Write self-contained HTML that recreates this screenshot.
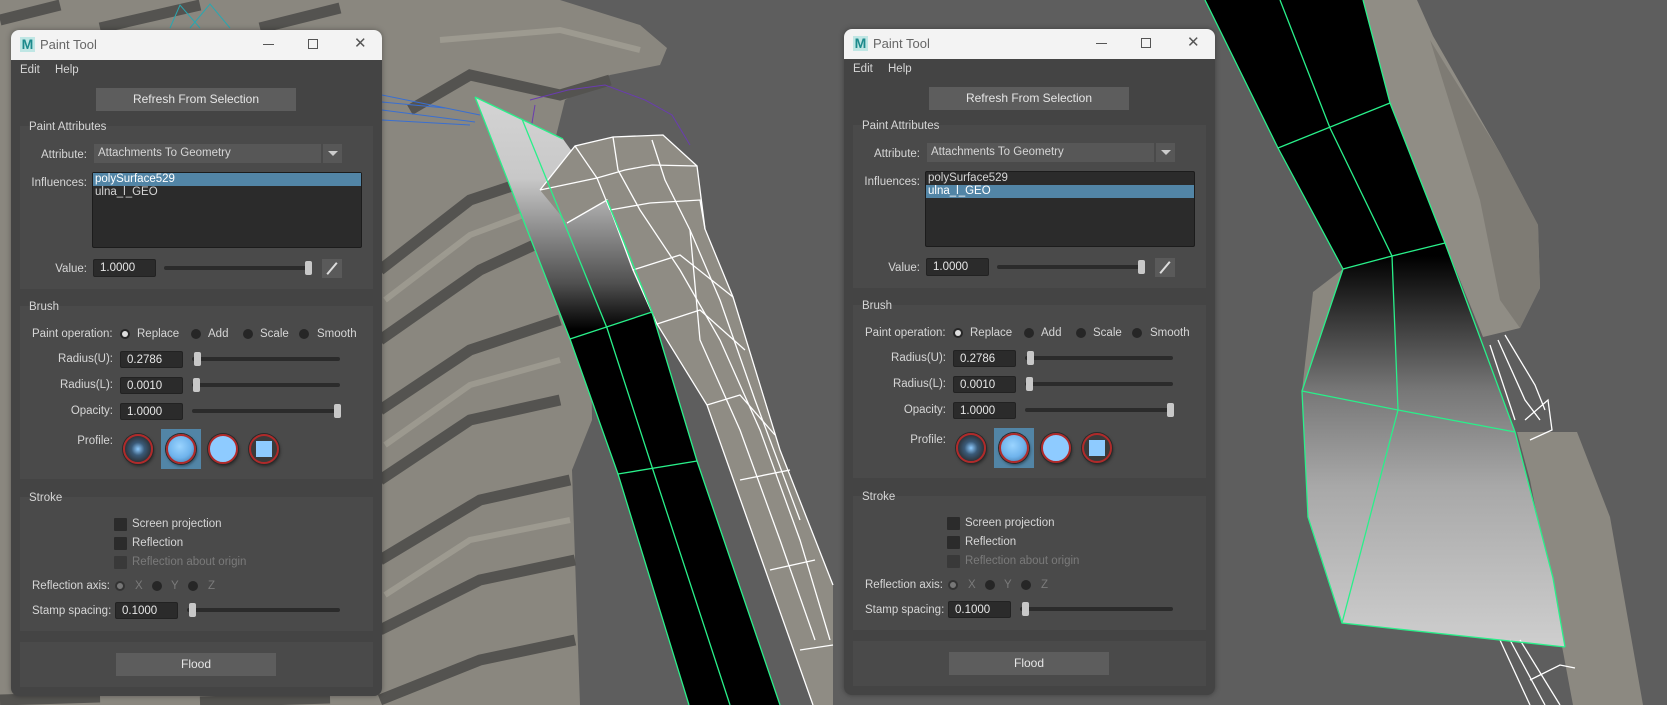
<!DOCTYPE html>
<html><head><meta charset="utf-8"><style>
*{margin:0;padding:0;box-sizing:border-box}
body{width:1667px;height:705px;overflow:hidden;background:#5e5e5e;position:relative;font-family:"Liberation Sans",sans-serif;font-size:11.5px;color:#d6d6d6}
svg.vp{position:absolute;left:0;top:0}
.win{position:absolute;width:371px;height:666px;background:#444;border-radius:8px;overflow:hidden;box-shadow:0 0 6px rgba(0,0,0,.35)}
.win div,.win span{position:absolute;white-space:nowrap}
.tb{left:0;top:0;width:371px;height:30px;background:#f3f3f3}
.logo{left:9px;top:7px;width:15px;height:15px;background:#bfe6e4;color:#1d8a8c;font-weight:bold;font-size:14px;line-height:15px;text-align:center}
.tt{left:29px;top:7px;font-size:13px;color:#666}
.grp{background:#4a4a4a;left:9px;width:353px}
.lbl{line-height:14px}
.r{text-align:right;width:100px}
.btn{background:#5d5d5d;text-align:center;color:#e6e6e6;font-size:12px}
.fld{background:#2b2b2b;border:1px solid #222;border-radius:2px;padding-left:6px;color:#e8e8e8;line-height:17px}
.trk{height:4px;background:#2b2b2b;border-radius:2px}
.hd{width:7px;height:14px;background:#c8c8c8;border-radius:2px}
.rad{width:10px;height:10px;border-radius:50%;background:#262626}
.rad.on::after{content:"";position:absolute;left:2px;top:2px;width:6px;height:6px;border-radius:50%;background:#ddd}
.cb{width:13px;height:13px;background:#2b2b2b;border-radius:1px}
.pf{width:30px;height:30px;border-radius:50%;border:2px solid #b02a2a;box-shadow:0 0 0 1px #2a2a2a,1px 2px 3px rgba(0,0,0,.5)}
.dis{color:#7a7a7a}
</style></head><body>
<svg class="vp" width="1667" height="705" viewBox="0 0 1667 705">
<polygon points="0,0 560,0 640,25 667,48 660,65 610,75 565,100 540,200 590,280 592,420 572,470 580,705 0,705" fill="#8a877f"/>
<g stroke="#545350" stroke-width="11" fill="none">
<path d="M380,270 L470,200 L560,170"/>
<path d="M380,340 L480,270 L545,240"/>
<path d="M380,410 L470,350 L560,320"/>
<path d="M380,480 L470,420 L560,400"/>
<path d="M380,560 L480,500 L570,480"/>
<path d="M380,630 L480,580 L575,560"/>
<path d="M380,700 L480,660 L575,640"/>
<path d="M410,110 L470,75 L560,95 L610,80"/>
<path d="M0,20 L60,5"/><path d="M100,28 L200,5"/><path d="M260,28 L340,8"/><path d="M0,700 L100,697"/><path d="M200,702 L330,698"/>
</g>
<g stroke="#a5a297" stroke-width="6" fill="none" opacity=".7">
<path d="M385,300 L470,235 L550,205"/><path d="M385,445 L470,385 L560,360"/><path d="M385,595 L470,540 L570,520"/><path d="M440,40 L560,30 L640,50"/>
</g>
<g stroke="#3a6fd0" stroke-width="1" fill="none"><path d="M382,95 L480,115"/><path d="M382,110 L475,122"/><path d="M382,120 L470,125"/><path d="M382,102 L445,108"/></g>
<g stroke="#2aa7b0" stroke-width="1" fill="none"><path d="M170,28 L180,5 L200,28"/><path d="M190,28 L210,4 L230,28"/></g>
<g stroke="#6a3cb0" stroke-width="1" fill="none"><path d="M530,100 L568,90 L605,85 L645,100 L672,115 L690,145"/><path d="M535,105 L530,135 L545,160 L555,175"/></g>
<defs>
<linearGradient id="g1" x1="0" y1="97" x2="0" y2="330" gradientUnits="userSpaceOnUse"><stop offset="0" stop-color="#d4d4d4"/><stop offset=".35" stop-color="#c8c8c8"/><stop offset=".8" stop-color="#505050"/><stop offset="1" stop-color="#000"/></linearGradient>
<linearGradient id="g2" x1="0" y1="256" x2="0" y2="640" gradientUnits="userSpaceOnUse"><stop offset="0" stop-color="#000"/><stop offset=".35" stop-color="#777"/><stop offset=".6" stop-color="#a8a8a8"/><stop offset="1" stop-color="#cdcdcd"/></linearGradient>
</defs>
<polygon points="475,97 563,139 607,200 652,312 570,339" fill="url(#g1)"/>
<polygon points="570,339 652,312 697,461 780,705 689,705 618,474" fill="#000"/>
<polygon points="540,190 575,146 613,137 663,135 697,166 705,229 733,297 780,450 833,585 833,705 813,705 707,405 657,324 633,270 607,200 567,223" fill="#8f8c84"/>
<g stroke="#fff" stroke-width="1.3" fill="none">
<path d="M540,190 575,146 613,137 663,135 697,166 705,229 733,297 780,450 833,585"/>
<path d="M567,223 607,200 633,270 657,324 707,405 813,705"/>
<path d="M540,190 597,178 625,170 652,165 697,166"/><path d="M575,146 597,178 610,210"/><path d="M613,137 618,170 640,210 680,270 720,340 760,430 800,540 830,640"/><path d="M652,140 665,180 690,230 720,300 755,400 800,520"/>
<path d="M610,210 650,203 700,200 705,229"/><path d="M633,270 680,255 733,297"/><path d="M657,324 700,310 745,350"/><path d="M707,405 740,395 775,435"/><path d="M740,480 790,470"/><path d="M770,570 815,560"/><path d="M800,650 833,645"/><path d="M690,230 700,340 740,430 780,540 815,640"/>
</g>
<g stroke="#29f08a" stroke-width="1.3" fill="none">
<path d="M475,97 570,339 618,474 689,705"/><path d="M475,97 563,139"/><path d="M607,200 652,312 697,461 780,705"/><path d="M522,119 607,328 653,470 730,705"/><path d="M570,339 652,312"/><path d="M618,474 697,461"/>
</g>
<polygon points="1363,0 1417,0 1433,36 1500,153 1538,225 1540,288 1520,328 1483,337 1445,243 1390,103" fill="#908d85"/>
<polygon points="1430,40 1500,153 1538,225 1540,288 1520,328 1500,300 1480,200" fill="#7e7b74"/>
<polygon points="1517,432 1577,432 1610,517 1643,705 1573,705 1553,598 1530,480" fill="#8c8981"/>
<polygon points="1313,292 1343,269 1320,350 1302,391" fill="#8a877f"/>
<polygon points="1205,0 1363,0 1390,103 1445,243 1343,269 1278,148" fill="#000"/>
<polygon points="1343,269 1445,243 1515,432 1553,578 1565,647 1342,623 1308,517 1302,391" fill="url(#g2)"/>
<g stroke="#fff" stroke-width="1.3" fill="none">
<path d="M1490,345 1515,420"/><path d="M1498,340 1525,400 1540,420"/><path d="M1505,335 1535,385 1545,410"/><path d="M1525,420 1548,400 1552,430 1530,440"/>
<path d="M1500,640 1530,705"/><path d="M1510,640 1545,705"/><path d="M1520,640 1560,705"/><path d="M1530,680 1560,665 1575,668"/>
</g>
<g stroke="#29f08a" stroke-width="1.3" fill="none">
<path d="M1205,0 1278,148 1343,269 1302,391 1308,517 1342,623 1565,647"/><path d="M1280,0 1330,128 1392,256 1398,410 1342,623"/><path d="M1363,0 1390,103 1445,243 1515,432 1553,578 1565,647"/><path d="M1278,148 1390,103"/><path d="M1343,269 1392,256 1445,243"/><path d="M1302,391 1398,410 1515,432"/>
</g>
</svg>

<div class="win" style="left:11px;top:30px">
<div class="tb"></div><div class="logo">M</div><div class="tt">Paint Tool</div>
<div style="left:252px;top:14px;width:11px;height:1px;background:#555"></div>
<div style="left:297px;top:9px;width:10px;height:10px;border:1px solid #555"></div>
<div style="left:343px;top:8px;font-size:15px;color:#555;line-height:12px">✕</div>
<div class="lbl" style="left:9px;top:33px">Edit</div><div class="lbl" style="left:44px;top:33px">Help</div>
<div class="btn" style="left:85px;top:58px;width:200px;height:23px;line-height:23px">Refresh From Selection</div>
<div class="grp" style="top:96px;height:163px"></div>
<div class="lbl" style="left:18px;top:90px">Paint Attributes</div>
<div class="lbl r" style="left:-24px;top:118px">Attribute:</div>
<div style="left:83px;top:114px;width:227px;height:19px;background:#575757;padding-left:4px;line-height:19px">Attachments To Geometry</div>
<div style="left:312px;top:114px;width:19px;height:19px;background:#575757"></div>
<div style="left:317px;top:121px;width:0;height:0;border-left:5px solid transparent;border-right:5px solid transparent;border-top:5px solid #ccc"></div>
<div class="lbl r" style="left:-24px;top:146px">Influences:</div>
<div style="left:81px;top:142px;width:270px;height:76px;background:#2b2b2b;border:1px solid #1c1c1c;border-radius:2px"></div>
<div style="left:82px;top:143px;width:268px;height:13px;background:#5285a6"></div>
<div style="left:84px;top:143px;line-height:13px;color:#fff">polySurface529</div>
<div style="left:84px;top:156px;line-height:13px">ulna_l_GEO</div>
<div class="lbl r" style="left:-24px;top:232px">Value:</div>
<div class="fld" style="left:82px;top:229px;width:63px;height:18px">1.0000</div>
<div class="trk" style="left:153px;top:236px;width:148px"></div><div class="hd" style="left:294px;top:231px"></div>
<div style="left:311px;top:229px;width:20px;height:19px;background:#5a5a5a"></div>
<div style="left:320px;top:231px;width:2px;height:15px;background:#ddd;transform:rotate(40deg)"></div>
<div class="grp" style="top:276px;height:173px"></div>
<div class="lbl" style="left:18px;top:270px">Brush</div>
<div class="lbl" style="left:21px;top:297px">Paint operation:</div>
<div class="rad on" style="left:109px;top:299px"></div><div class="lbl" style="left:126px;top:297px">Replace</div>
<div class="rad" style="left:180px;top:299px"></div><div class="lbl" style="left:197px;top:297px">Add</div>
<div class="rad" style="left:232px;top:299px"></div><div class="lbl" style="left:249px;top:297px">Scale</div>
<div class="rad" style="left:288px;top:299px"></div><div class="lbl" style="left:306px;top:297px">Smooth</div>
<div class="lbl r" style="left:2px;top:322px">Radius(U):</div><div class="fld" style="left:109px;top:321px;width:63px;height:17px">0.2786</div>
<div class="trk" style="left:181px;top:327px;width:148px"></div><div class="hd" style="left:183px;top:322px"></div>
<div class="lbl r" style="left:2px;top:348px">Radius(L):</div><div class="fld" style="left:109px;top:347px;width:63px;height:17px">0.0010</div>
<div class="trk" style="left:181px;top:353px;width:148px"></div><div class="hd" style="left:182px;top:348px"></div>
<div class="lbl r" style="left:2px;top:374px">Opacity:</div><div class="fld" style="left:109px;top:373px;width:63px;height:17px">1.0000</div>
<div class="trk" style="left:181px;top:379px;width:148px"></div><div class="hd" style="left:323px;top:374px"></div>
<div class="lbl r" style="left:2px;top:404px">Profile:</div>
<div style="left:150px;top:399px;width:40px;height:40px;background:#5285a6"></div>
<div class="pf" style="left:112px;top:404px;background:radial-gradient(circle,#8ecbff 0,#3a5a78 35%,#2c2f33 75%)"></div>
<div class="pf" style="left:155px;top:404px;background:radial-gradient(circle at 45% 40%,#9ad4ff 0,#6fb3ec 55%,#3c6c98 100%)"></div>
<div class="pf" style="left:197px;top:404px;background:#8ecbff"></div>
<div class="pf" style="left:238px;top:404px;background:#3a3a3a"><div style="left:5px;top:5px;width:16px;height:16px;background:#8ecbff"></div></div>
<div class="grp" style="top:467px;height:134px"></div>
<div class="lbl" style="left:18px;top:461px">Stroke</div>
<div class="cb" style="left:103px;top:488px"></div><div class="lbl" style="left:121px;top:487px">Screen projection</div>
<div class="cb" style="left:103px;top:507px"></div><div class="lbl" style="left:121px;top:506px">Reflection</div>
<div class="cb" style="left:103px;top:526px;background:#393939"></div><div class="lbl dis" style="left:121px;top:525px">Reflection about origin</div>
<div class="lbl" style="left:21px;top:549px">Reflection axis:</div>
<div class="rad" style="left:104px;top:551px;border:2px solid #333;background:#777"></div><div class="lbl dis" style="left:124px;top:549px">X</div>
<div class="rad" style="left:141px;top:551px"></div><div class="lbl dis" style="left:160px;top:549px">Y</div>
<div class="rad" style="left:177px;top:551px"></div><div class="lbl dis" style="left:197px;top:549px">Z</div>
<div class="lbl" style="left:21px;top:574px">Stamp spacing:</div>
<div class="fld" style="left:104px;top:572px;width:63px;height:17px">0.1000</div>
<div class="trk" style="left:176px;top:578px;width:153px"></div><div class="hd" style="left:178px;top:573px"></div>
<div class="grp" style="top:612px;height:45px"></div>
<div class="btn" style="left:105px;top:623px;width:160px;height:23px;line-height:23px">Flood</div>
</div>

<div class="win" style="left:844px;top:29px">
<div class="tb"></div><div class="logo">M</div><div class="tt">Paint Tool</div>
<div style="left:252px;top:14px;width:11px;height:1px;background:#555"></div>
<div style="left:297px;top:9px;width:10px;height:10px;border:1px solid #555"></div>
<div style="left:343px;top:8px;font-size:15px;color:#555;line-height:12px">✕</div>
<div class="lbl" style="left:9px;top:33px">Edit</div><div class="lbl" style="left:44px;top:33px">Help</div>
<div class="btn" style="left:85px;top:58px;width:200px;height:23px;line-height:23px">Refresh From Selection</div>
<div class="grp" style="top:96px;height:163px"></div>
<div class="lbl" style="left:18px;top:90px">Paint Attributes</div>
<div class="lbl r" style="left:-24px;top:118px">Attribute:</div>
<div style="left:83px;top:114px;width:227px;height:19px;background:#575757;padding-left:4px;line-height:19px">Attachments To Geometry</div>
<div style="left:312px;top:114px;width:19px;height:19px;background:#575757"></div>
<div style="left:317px;top:121px;width:0;height:0;border-left:5px solid transparent;border-right:5px solid transparent;border-top:5px solid #ccc"></div>
<div class="lbl r" style="left:-24px;top:146px">Influences:</div>
<div style="left:81px;top:142px;width:270px;height:76px;background:#2b2b2b;border:1px solid #1c1c1c;border-radius:2px"></div>
<div style="left:82px;top:156px;width:268px;height:13px;background:#5285a6"></div>
<div style="left:84px;top:143px;line-height:13px">polySurface529</div>
<div style="left:84px;top:156px;line-height:13px;color:#fff">ulna_l_GEO</div>
<div class="lbl r" style="left:-24px;top:232px">Value:</div>
<div class="fld" style="left:82px;top:229px;width:63px;height:18px">1.0000</div>
<div class="trk" style="left:153px;top:236px;width:148px"></div><div class="hd" style="left:294px;top:231px"></div>
<div style="left:311px;top:229px;width:20px;height:19px;background:#5a5a5a"></div>
<div style="left:320px;top:231px;width:2px;height:15px;background:#ddd;transform:rotate(40deg)"></div>
<div class="grp" style="top:276px;height:173px"></div>
<div class="lbl" style="left:18px;top:270px">Brush</div>
<div class="lbl" style="left:21px;top:297px">Paint operation:</div>
<div class="rad on" style="left:109px;top:299px"></div><div class="lbl" style="left:126px;top:297px">Replace</div>
<div class="rad" style="left:180px;top:299px"></div><div class="lbl" style="left:197px;top:297px">Add</div>
<div class="rad" style="left:232px;top:299px"></div><div class="lbl" style="left:249px;top:297px">Scale</div>
<div class="rad" style="left:288px;top:299px"></div><div class="lbl" style="left:306px;top:297px">Smooth</div>
<div class="lbl r" style="left:2px;top:322px">Radius(U):</div><div class="fld" style="left:109px;top:321px;width:63px;height:17px">0.2786</div>
<div class="trk" style="left:181px;top:327px;width:148px"></div><div class="hd" style="left:183px;top:322px"></div>
<div class="lbl r" style="left:2px;top:348px">Radius(L):</div><div class="fld" style="left:109px;top:347px;width:63px;height:17px">0.0010</div>
<div class="trk" style="left:181px;top:353px;width:148px"></div><div class="hd" style="left:182px;top:348px"></div>
<div class="lbl r" style="left:2px;top:374px">Opacity:</div><div class="fld" style="left:109px;top:373px;width:63px;height:17px">1.0000</div>
<div class="trk" style="left:181px;top:379px;width:148px"></div><div class="hd" style="left:323px;top:374px"></div>
<div class="lbl r" style="left:2px;top:404px">Profile:</div>
<div style="left:150px;top:399px;width:40px;height:40px;background:#5285a6"></div>
<div class="pf" style="left:112px;top:404px;background:radial-gradient(circle,#8ecbff 0,#3a5a78 35%,#2c2f33 75%)"></div>
<div class="pf" style="left:155px;top:404px;background:radial-gradient(circle at 45% 40%,#9ad4ff 0,#6fb3ec 55%,#3c6c98 100%)"></div>
<div class="pf" style="left:197px;top:404px;background:#8ecbff"></div>
<div class="pf" style="left:238px;top:404px;background:#3a3a3a"><div style="left:5px;top:5px;width:16px;height:16px;background:#8ecbff"></div></div>
<div class="grp" style="top:467px;height:134px"></div>
<div class="lbl" style="left:18px;top:461px">Stroke</div>
<div class="cb" style="left:103px;top:488px"></div><div class="lbl" style="left:121px;top:487px">Screen projection</div>
<div class="cb" style="left:103px;top:507px"></div><div class="lbl" style="left:121px;top:506px">Reflection</div>
<div class="cb" style="left:103px;top:526px;background:#393939"></div><div class="lbl dis" style="left:121px;top:525px">Reflection about origin</div>
<div class="lbl" style="left:21px;top:549px">Reflection axis:</div>
<div class="rad" style="left:104px;top:551px;border:2px solid #333;background:#777"></div><div class="lbl dis" style="left:124px;top:549px">X</div>
<div class="rad" style="left:141px;top:551px"></div><div class="lbl dis" style="left:160px;top:549px">Y</div>
<div class="rad" style="left:177px;top:551px"></div><div class="lbl dis" style="left:197px;top:549px">Z</div>
<div class="lbl" style="left:21px;top:574px">Stamp spacing:</div>
<div class="fld" style="left:104px;top:572px;width:63px;height:17px">0.1000</div>
<div class="trk" style="left:176px;top:578px;width:153px"></div><div class="hd" style="left:178px;top:573px"></div>
<div class="grp" style="top:612px;height:45px"></div>
<div class="btn" style="left:105px;top:623px;width:160px;height:23px;line-height:23px">Flood</div>
</div>
</body></html>
